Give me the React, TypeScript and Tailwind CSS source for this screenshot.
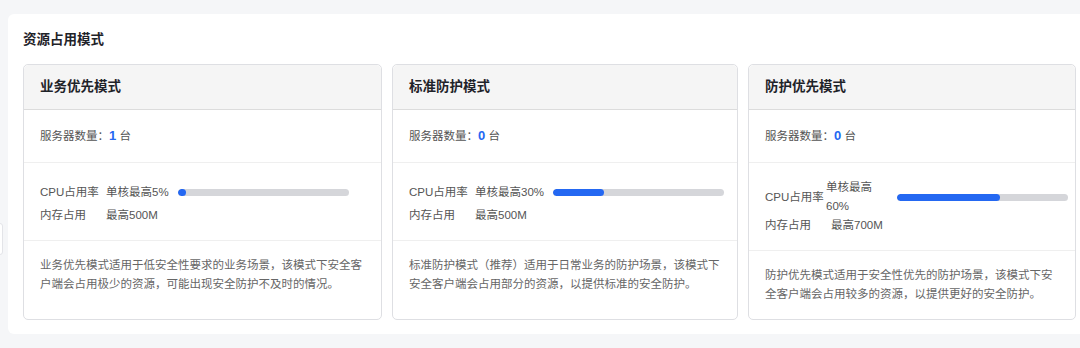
import React from 'react';

type Mode = {
  title: string;
  count: number;
  cpu: string;
  cpuPct: number;
  mem: string;
  desc: string;
  cardCls: string;
  labelCls: string;
  valueCls: string;
};

const modes: Mode[] = [
  {
    title: '业务优先模式',
    count: 1,
    cpu: '单核最高5%',
    cpuPct: 5,
    mem: '最高500M',
    desc: '业务优先模式适用于低安全性要求的业务场景，该模式下安全客户端会占用极少的资源，可能出现安全防护不及时的情况。',
    cardCls: 'w-[359px]',
    labelCls: 'w-[66px]',
    valueCls: 'whitespace-nowrap',
  },
  {
    title: '标准防护模式',
    count: 0,
    cpu: '单核最高30%',
    cpuPct: 30,
    mem: '最高500M',
    desc: '标准防护模式（推荐）适用于日常业务的防护场景，该模式下安全客户端会占用部分的资源，以提供标准的安全防护。',
    cardCls: 'w-[346px]',
    labelCls: 'w-[66px]',
    valueCls: 'whitespace-nowrap',
  },
  {
    title: '防护优先模式',
    count: 0,
    cpu: '单核最高60%',
    cpuPct: 60,
    mem: '最高700M',
    desc: '防护优先模式适用于安全性优先的防护场景，该模式下安全客户端会占用较多的资源，以提供更好的安全防护。',
    cardCls: 'w-[328px]',
    labelCls: 'w-[61px]',
    valueCls: 'w-[62px]',
  },
];

function ModeCard({ m }: { m: Mode }) {
  return (
    <div className={`${m.cardCls} shrink-0 flex flex-col border border-[#dedfe3] rounded-[5px] bg-white`}>
      {/* Header */}
      <div className="h-[45px] px-4 flex items-center bg-[#f5f5f5] border-b border-[#dcdcdc] rounded-t-[5px]">
        <span className="text-[13.5px] font-bold text-[#1f2329]">{m.title}</span>
      </div>

      {/* Servers */}
      <div className="px-4 py-4 border-b border-[#efefef] text-[11.5px] leading-[19px] text-[#555]">
        服务器数量：
        <span className="text-[13px] font-bold text-[#2468f2]">{m.count}</span> 台
      </div>

      {/* Resource usage */}
      <div className="px-4 py-[15px] border-b border-[#efefef] text-[11.5px] leading-[19px] text-[#555]">
        <div className="flex items-center min-h-[28px]">
          <span className={`${m.labelCls} shrink-0 whitespace-nowrap`}>CPU占用率</span>
          <span className={`${m.valueCls} shrink-0`}>{m.cpu}</span>
          <div className="ml-[9px] w-[171px] shrink-0 h-[7px] rounded-full bg-[#d5d6da] overflow-hidden">
            <div className="h-full rounded-full bg-[#2468f2]" style={{ width: `${m.cpuPct}%` }} />
          </div>
        </div>
        <div className="flex items-center">
          <span className="w-[66px] shrink-0">内存占用</span>
          <span>{m.mem}</span>
        </div>
      </div>

      {/* Description */}
      <div className="flex-1 px-4 pt-[15px] pb-4 text-[11.5px] leading-[18.5px] text-[#666]">
        {m.desc}
      </div>
    </div>
  );
}

export default function App() {
  return (
    <div
      className="relative w-[1080px] h-[348px] overflow-hidden bg-[#f5f6f8]"
      style={{ fontFamily: '"Liberation Sans", "Noto Sans CJK SC", sans-serif' }}
    >
      {/* partially visible side tab */}
      <div className="absolute left-[-7px] top-[223px] w-[10px] h-[32px] bg-white border border-[#e3e4e8] rounded-[3px]" />

      <div className="ml-2 mt-[14px] w-[1090px] h-[320px] bg-white rounded-[6px] pl-[15px] pt-[16px]">
        <h2 className="text-[13.5px] leading-[20px] font-bold text-[#1f2329]">资源占用模式</h2>
        <div className="mt-[14px] flex items-stretch gap-[10px]">
          {modes.map((m) => (
            <ModeCard key={m.title} m={m} />
          ))}
        </div>
      </div>
    </div>
  );
}
